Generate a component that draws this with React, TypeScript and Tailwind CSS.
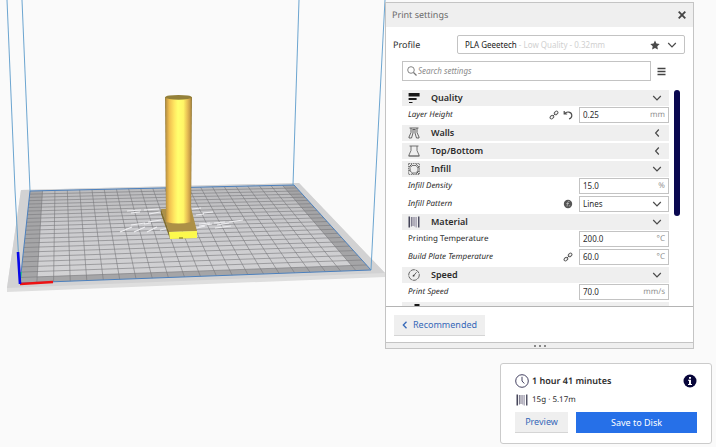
import { useState } from 'react';
import type { ReactNode } from 'react';

type Setting = {
  id: string;
  label: string;
  value: string;
  unit?: string;
  options?: string[];
  plain?: boolean;
  linked?: boolean;
  reset?: boolean;
  formula?: boolean;
};

type Category = {
  name: string;
  icon: ReactNode;
  open: boolean;
  settings: Setting[];
};

const QualityIcon = () => (
  <svg viewBox="0 0 12 12" className="h-3 w-3 shrink-0" fill="#191919" aria-hidden="true">
    <path d="M.6 1h11v3.400H.6zM.6 6h8v2H.6zM1 10h3.500v1H1z" />
  </svg>
);

const WallsIcon = () => (
  <svg viewBox="0 0 12 12" className="h-3 w-3 shrink-0" fill="none" stroke="#444" strokeWidth=".8" aria-hidden="true">
    <path d="M1.500 1h9M3 1v4.500L1 10v1h2.500M5 2.500v3.500L3.500 11M9 1v4.500l2 4.500v1H8.500M7 2.500v3.500L8.500 11M4.500 2.500h3" />
  </svg>
);

const TopBottomIcon = () => (
  <svg viewBox="0 0 12 12" className="h-3 w-3 shrink-0" fill="none" stroke="#555" strokeWidth=".8" aria-hidden="true">
    <path d="M1.500 1h9M3 1v4.500L1 10v1M9 1v4.500l2 4.500v1" />
    <path d="M.6 11h10.800" strokeWidth="1.200" />
  </svg>
);

const InfillIcon = () => (
  <svg viewBox="0 0 12 12" className="h-3 w-3 shrink-0" fill="none" stroke="#444" strokeWidth=".7" aria-hidden="true">
    <rect x=".6" y=".6" width="10.800" height="10.800" strokeDasharray="1.500 .7" />
    <path d="M4 2.500h4L10 5v3L7.500 10h-3L2 8V4.500zM1 4l3-3M1 8l1.500-1M8 1l3 3M4 11l.5-1M8 11l3-3M10 5l1-1M2 2l1.500 1.500M9 9l2 2" />
  </svg>
);

const SpoolIcon = () => (
  <svg viewBox="0 0 12 12" className="h-3 w-3 shrink-0" aria-hidden="true">
    <path d="M1.200.5v11" stroke="#191932" strokeWidth="1.200" />
    <path d="M3.400 1v9.500M5 1v9" stroke="#55506a" strokeWidth=".8" />
    <path d="M6.800 1v9.500M8.200 1v10.500" stroke="#8a869c" strokeWidth=".9" />
    <path d="M10.800.5v11" stroke="#191932" strokeWidth="1.100" />
  </svg>
);

const SpeedIcon = () => (
  <svg viewBox="0 0 12 12" className="h-3 w-3 shrink-0" fill="none" stroke="#444" strokeWidth=".8" aria-hidden="true">
    <circle cx="6" cy="6" r="5.300" strokeDasharray="4.500 .7" />
    <path d="M5.200 7.200 8.500 3.300" />
    <circle cx="5.600" cy="6.700" r=".9" fill="#444" stroke="none" />
  </svg>
);

const TravelIcon = () => (
  <svg viewBox="0 0 12 12" className="h-3 w-3 shrink-0" fill="#191919" aria-hidden="true">
    <path d="M6.500 0h5v3l-1 2h-3l-1-2zM0 10h12v1H0z" />
  </svg>
);

const Chevron = ({ dir }: { dir: 'down' | 'left' }) => (
  <svg viewBox="0 0 10 10" className="h-[10px] w-[10px] shrink-0" fill="none" stroke="#4a4a4a" strokeWidth="1.200" aria-hidden="true">
    <path d={dir === 'down' ? 'M1.200 3 5 6.800 8.800 3' : 'M6.800 1.500 3.600 5l3.200 3.500'} />
  </svg>
);

const LinkIcon = () => (
  <svg viewBox="0 0 10 10" className="h-[10px] w-[10px] shrink-0" fill="none" stroke="#5a5a5a" strokeWidth="1" aria-label="Linked">
    <rect x="-2" y="-1.400" width="4" height="2.800" rx="1.400" transform="translate(2.900 7.100) rotate(-45)" />
    <rect x="-2" y="-1.400" width="4" height="2.800" rx="1.400" transform="translate(7.100 2.900) rotate(-45)" />
    <path d="M3.800 6.200 6.200 3.800" />
  </svg>
);

const ResetIcon = () => (
  <svg viewBox="0 0 10 10" className="h-[10px] w-[10px] shrink-0" fill="none" stroke="#4f4f4f" strokeWidth="1.200" aria-hidden="true">
    <path d="M1.200 1v3h3M1.500 3.800C3.500 1 8.800 1.500 8.800 5.500c0 1.500-1 3-2.800 3.500" />
  </svg>
);

const FormulaIcon = () => (
  <svg viewBox="0 0 10 10" className="h-[10px] w-[10px] shrink-0" aria-label="Calculated">
    <circle cx="5" cy="5" r="4.200" fill="#555" />
    <path d="M6.500 2.500c-1.500-.5-1.800.5-2 2L4 7.500M3.300 4.500H6M5.800 6.800h1.400" fill="none" stroke="#ccc" strokeWidth=".7" />
  </svg>
);

const initialCategories: Category[] = [
  {
    name: 'Quality',
    icon: <QualityIcon />,
    open: true,
    settings: [{ id: 'layer-height', label: 'Layer Height', value: '0.25', unit: 'mm', linked: true, reset: true }],
  },
  { name: 'Walls', icon: <WallsIcon />, open: false, settings: [] },
  { name: 'Top/Bottom', icon: <TopBottomIcon />, open: false, settings: [] },
  {
    name: 'Infill',
    icon: <InfillIcon />,
    open: true,
    settings: [
      { id: 'infill-density', label: 'Infill Density', value: '15.0', unit: '%' },
      { id: 'infill-pattern', label: 'Infill Pattern', value: 'Lines', options: ['Lines', 'Grid', 'Cubic'], formula: true },
    ],
  },
  {
    name: 'Material',
    icon: <SpoolIcon />,
    open: true,
    settings: [
      { id: 'print-temp', label: 'Printing Temperature', value: '200.0', unit: '°C', plain: true },
      { id: 'plate-temp', label: 'Build Plate Temperature', value: '60.0', unit: '°C', linked: true },
    ],
  },
  {
    name: 'Speed',
    icon: <SpeedIcon />,
    open: true,
    settings: [{ id: 'print-speed', label: 'Print Speed', value: '70.0', unit: 'mm/s' }],
  },
];

// Build plate corners in screen space: back left, back right, front right, front left
const corners = [
  [30, 191],
  [294, 185],
  [371, 270],
  [20, 283],
];
const CELLS = 22;

// Projects a plate coordinate (0..1, 0..1) onto the screen
const project = (u: number, v: number) => {
  const [[x0, y0], [x1, y1], [x2, y2], [x3, y3]] = corners;
  const dx1 = x1 - x2;
  const dx2 = x3 - x2;
  const dy1 = y1 - y2;
  const dy2 = y3 - y2;
  const sx = x0 - x1 + x2 - x3;
  const sy = y0 - y1 + y2 - y3;
  const det = dx1 * dy2 - dx2 * dy1;
  const g = (sx * dy2 - dx2 * sy) / det;
  const h = (dx1 * sy - sx * dy1) / det;
  const w = g * u + h * v + 1;
  const x = ((x1 - x0 + g * x1) * u + (x3 - x0 + h * x3) * v + x0) / w;
  const y = ((y1 - y0 + g * y1) * u + (y3 - y0 + h * y3) * v + y0) / w;
  return `${x.toFixed(2)} ${y.toFixed(2)}`;
};

const gridPath = Array.from({ length: CELLS - 1 }, (_, i) => {
  const t = (i + 1) / CELLS;
  return `M${project(t, 0)}L${project(t, 1)}M${project(0, t)}L${project(1, t)}`;
}).join('');

const edge = 1 / CELLS;
const platePath = `M${project(0, 0)}L${project(1, 0)}L${project(1, 1)}L${project(0, 1)}Z`;
const printablePath = `M${project(edge, 0)}L${project(1 - edge, 0)}L${project(1 - edge, 1 - edge)}L${project(edge, 1 - edge)}Z`;

const Viewport = () => (
  <svg width="390" height="300" viewBox="0 0 390 300" className="absolute left-0 top-0" role="img" aria-label="Model on build plate">
    <defs>
      <linearGradient id="column">
        <stop offset="0" stopColor="#8f7a3c" />
        <stop offset=".06" stopColor="#c79c45" />
        <stop offset=".16" stopColor="#f0c050" />
        <stop offset=".34" stopColor="#ffe661" />
        <stop offset=".48" stopColor="#ffff6e" />
        <stop offset=".68" stopColor="#fff566" />
        <stop offset=".82" stopColor="#e9c155" />
        <stop offset=".93" stopColor="#c59a48" />
        <stop offset="1" stopColor="#8b7638" />
      </linearGradient>
      <linearGradient id="plate" x2="0" y2="1">
        <stop offset="0" stopColor="#b9b9bb" />
        <stop offset=".45" stopColor="#cbcbce" />
        <stop offset="1" stopColor="#d2d2d4" />
      </linearGradient>
    </defs>
    <path d="M21 190 299 183 385 273V277L7 292V288Z" fill="#dedede" />
    <path d="M21 190 299 183 385 273 7 288Z" fill="#d2d2d3" />
    <path d={platePath} fill="#a5a5a7" />
    <path d={printablePath} fill="url(#plate)" />
    <path d={gridPath} stroke="#78787c" strokeWidth=".6" />
    <path d={platePath} fill="none" stroke="#4c80bd" strokeWidth="1" />
    <path d="M7 0 15 190 20 283M22 0 30 191M299 0 293 185M385 0 375 190 371 270" fill="none" stroke="#5b9bcb" strokeWidth=".9" />
    {/* Glossy logo on the plate */}
    <path
      d="m127 211 14-1m3 0 15-1m-28 4 9-1m9 2 11-2m32-3 9-1m2 5 10-1m-17 3 8-1M131 225l14-2m3-1 13-2m-41 12 12-5m2 5 11-5m2 5 10-5m3 3 9-2m30-4 11-1m4 0 11-1m4 0 14-2m-44 6 13-2m5 1 12-2m-36 6 12-3m10 2 16-2m-87-2 7-1"
      fill="none"
      stroke="#ededf0"
      strokeWidth="1.200"
    />
    <path d="M161 209 191 208 197 231 169 232Z" fill="#ad9046" />
    <path d="M161 209 169 232 170 239 161 214Z" fill="#806c2c" />
    <path d="M169 232 197 231V238L170 239Z" fill="#fcf94d" />
    <path d="M179 238h4" stroke="#6f6825" strokeWidth="1" />
    <path d="M165 97h27L191 222q-12 3-25 0Z" fill="url(#column)" />
    <ellipse cx="178.500" cy="97.300" rx="13.200" ry="2.400" fill="#93803a" />
    {/* Origin axes */}
    <path d="M21 272 20 282" stroke="#10e070" strokeWidth="1.500" />
    <path d="M20 284 53 282" stroke="#ed1212" strokeWidth="2.600" />
    <path d="M18 252 20 284" stroke="#0808e8" strokeWidth="2.600" />
  </svg>
);

const SettingRow = ({ setting }: { setting: Setting }) => {
  const [value, setValue] = useState(setting.value);

  return (
    <div className="flex h-[18px] items-center pb-[2px] pl-[6px]">
      <label htmlFor={setting.id} className={`flex-1 text-[8px] text-[#2c2c2c] ${setting.plain ? '' : 'italic'}`}>
        {setting.label}
      </label>
      <div className="flex gap-1 pr-[6px]">
        {setting.linked && <LinkIcon />}
        {setting.reset && (
          <button aria-label={`Reset ${setting.label}`}>
            <ResetIcon />
          </button>
        )}
        {setting.formula && <FormulaIcon />}
      </div>
      <div className="flex h-4 w-[90px] items-center border border-[#c3c3c3] bg-white px-[3px] text-[8px]">
        {setting.options ? (
          <>
            <select
              id={setting.id}
              value={value}
              onChange={(e) => setValue(e.target.value)}
              className="min-w-0 flex-1 appearance-none bg-transparent text-[#2c2c2c] outline-none"
            >
              {setting.options.map((option) => (
                <option key={option}>{option}</option>
              ))}
            </select>
            <div className="pr-[3px]">
              <Chevron dir="down" />
            </div>
          </>
        ) : (
          <>
            <input
              id={setting.id}
              value={value}
              onChange={(e) => setValue(e.target.value)}
              className="w-0 min-w-0 flex-1 bg-transparent text-[#2c2c2c] outline-none"
            />
            <span className="text-[#8f8f8f]">{setting.unit}</span>
          </>
        )}
      </div>
    </div>
  );
};

const SettingsPanel = () => {
  const [categories, setCategories] = useState(initialCategories);
  const [search, setSearch] = useState('');

  const toggle = (name: string) =>
    setCategories(categories.map((c) => (c.name === name ? { ...c, open: !c.open } : c)));

  return (
    <section className="ml-[385px] mr-[22px] border border-[#c4c4c4] bg-white">
      <header className="flex h-6 items-center justify-between bg-[#efefef] pl-[6px] pr-[7px]">
        <h1 className="text-[9px] text-[#6a6a6a]">Print settings</h1>
        <button aria-label="Close">
          <svg viewBox="0 0 8 8" className="h-2 w-2" stroke="#444" strokeWidth="1.800">
            <path d="m.7.7 6.600 6.600M7.300.7.7 7.300" />
          </svg>
        </button>
      </header>

      {/* Profile */}
      <div className="flex items-center pl-[7px] pr-2 pt-2">
        <span className="w-16 text-[9px] text-[#2c2c2c]">Profile</span>
        <button className="flex h-[19px] flex-1 items-center rounded-[2px] border border-[#c3c3c3] px-[7px] text-left text-[8px]">
          <span className="flex-1 text-[#d0d0d0]">
            <span className="text-[#191919]">PLA Geeetech</span> - Low Quality - 0.32mm
          </span>
          <svg viewBox="0 0 10 10" className="mr-[7px] h-[10px] w-[10px]" fill="#4a4a4a" aria-hidden="true">
            <path d="m5 .5 1.400 3 3.300.4-2.400 2.300.6 3.300L5 7.900 2.100 9.500l.6-3.300L.3 3.900l3.300-.4z" />
          </svg>
          <Chevron dir="down" />
        </button>
      </div>

      {/* Search */}
      <div className="flex items-center gap-[6px] pl-4 pr-[27px] pt-[7px]">
        <label className="flex h-5 flex-1 items-center gap-px border border-[#c3c3c3] px-1">
          <svg viewBox="0 0 10 10" className="h-[10px] w-[10px]" fill="none" stroke="#777" aria-hidden="true">
            <circle cx="4" cy="4" r="3.300" strokeWidth=".9" />
            <path d="m6.500 6.500 3 3" strokeWidth="1.200" />
          </svg>
          <input
            aria-label="Search settings"
            placeholder="Search settings"
            value={search}
            onChange={(e) => setSearch(e.target.value)}
            className="w-0 flex-1 text-[8px] italic outline-none placeholder:text-[#8c8c8c]"
          />
        </label>
        <button aria-label="Setting visibility">
          <svg viewBox="0 0 9 9" className="h-[9px] w-[9px]" stroke="#444" strokeWidth="1.300">
            <path d="M.5 1.500h8M.5 4.500h8M.5 7.500h8" />
          </svg>
        </button>
      </div>

      {/* Settings list */}
      <div className="flex h-[226px] gap-[5px] overflow-hidden border-b border-[#b4b4b4] pl-4 pr-[13px] pt-[9px]">
        <div className="flex-1">
          {categories.map((category) => (
            <div key={category.name}>
              <button
                onClick={() => toggle(category.name)}
                aria-expanded={category.open}
                className={`flex h-4 w-full items-center bg-[#efefef] pl-[6px] pr-[7px] text-left ${
                  category.open ? 'mb-px' : 'mb-[2px]'
                }`}
              >
                {category.icon}
                <span className="flex-1 pl-[11px] text-[9px] font-semibold text-[#2c2c2c]">{category.name}</span>
                <Chevron dir={category.open ? 'down' : 'left'} />
              </button>
              {category.open && category.settings.map((setting) => <SettingRow key={setting.id} setting={setting} />)}
            </div>
          ))}
          <button aria-label="Travel" className="flex h-4 w-full items-center justify-between bg-[#efefef] pl-[6px] pr-[7px]">
            <TravelIcon />
            <Chevron dir="left" />
          </button>
        </div>
        <div className="h-[126px] w-[6px] rounded-full bg-[#0a0850]" />
      </div>

      <div className="px-2 pb-[6px] pt-2">
        <button className="flex h-[21px] items-center gap-[5px] border-b border-[#d5d5d5] bg-[#efefef] px-2 text-[9px] text-[#3568b8]">
          <svg viewBox="0 0 6 8" className="h-2 w-[6px]" fill="none" stroke="#3568b8" strokeWidth="1.300" aria-hidden="true">
            <path d="M4.500.7 1.300 4l3.200 3.300" />
          </svg>
          Recommended
        </button>
      </div>
      <div className="flex h-[6px] items-center justify-center gap-[3px] border-t border-[#c4c4c4] bg-[#efefef]">
        <span className="h-[2px] w-[2px] rounded-full bg-[#666]" />
        <span className="h-[2px] w-[2px] rounded-full bg-[#666]" />
        <span className="h-[2px] w-[2px] rounded-full bg-[#666]" />
      </div>
    </section>
  );
};

const JobCard = () => (
  <section className="ml-[500px] mr-1 mt-[14px] rounded-[3px] border border-[#cbcbcb] bg-white px-[14px] pb-[10px] pt-[10px]">
    <div className="flex items-center">
      <svg viewBox="0 0 14 14" className="h-[14px] w-[14px]" fill="none" stroke="#2f2d50" strokeWidth=".9" aria-hidden="true">
        <circle cx="7" cy="7" r="6.300" />
        <path d="M7 2.800V7l2.300 2.500" />
      </svg>
      <h2 className="flex-1 pl-[3px] text-[9px] font-semibold leading-[14px] text-[#2c2c2c]">1 hour 41 minutes</h2>
      <button aria-label="Print details">
        <svg viewBox="0 0 14 14" className="h-[14px] w-[14px]">
          <circle cx="7" cy="7" r="6.500" fill="#08063a" />
          <path d="M6 3h2v1.700H6zM5 5.700h3v4.200h1V11H5V9.900h1V6.800H5z" fill="#fff" />
        </svg>
      </button>
    </div>
    <div className="flex items-center gap-1 pl-px pt-[5px] text-[8px] leading-[14px] text-[#2c2c2c]">
      <SpoolIcon />
      15g · 5.17m
    </div>
    <div className="flex gap-2 pt-[5px] text-[9px]">
      <button className="h-[21px] w-[53px] border-b border-[#d5d5d5] bg-[#efefef] text-[#3568b8]">Preview</button>
      <button className="h-[21px] flex-1 bg-[#2670e8] text-white">Save to Disk</button>
    </div>
  </section>
);

const App = () => (
  <main className="relative min-h-screen bg-[#fafafa] pt-[2px] font-['Noto_Sans','Open_Sans',sans-serif] [text-rendering:geometricPrecision]">
    <Viewport />
    <div className="relative">
      <SettingsPanel />
      <JobCard />
    </div>
  </main>
);

export default App;
